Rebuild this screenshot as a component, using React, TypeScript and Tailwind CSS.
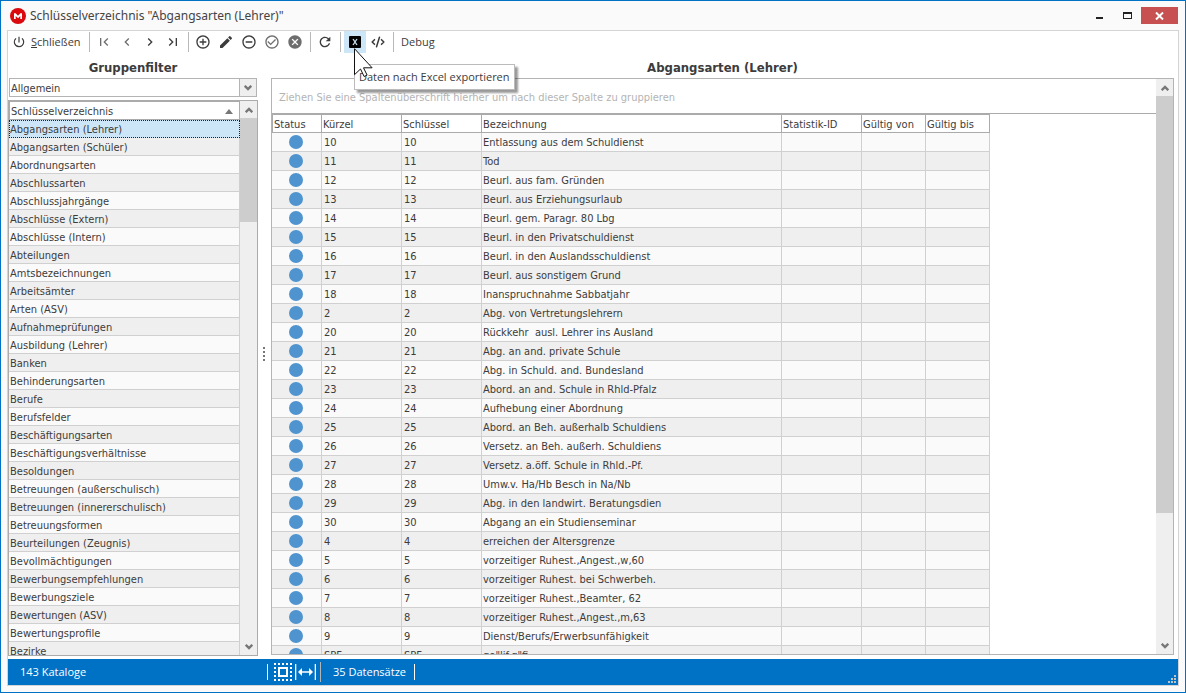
import type { ReactNode } from "react";
import { CodeXml } from "lucide-react";
import {
  MdAddCircleOutline,
  MdCancel,
  MdCheckCircleOutline,
  MdChevronLeft,
  MdChevronRight,
  MdEdit,
  MdFirstPage,
  MdLastPage,
  MdPowerSettingsNew,
  MdRefresh,
  MdRemoveCircleOutline,
} from "react-icons/md";

const catalogs = [
  "Abgangsarten (Lehrer)", "Abgangsarten (Schüler)", "Abordnungsarten", "Abschlussarten",
  "Abschlussjahrgänge", "Abschlüsse (Extern)", "Abschlüsse (Intern)", "Abteilungen",
  "Amtsbezeichnungen", "Arbeitsämter", "Arten (ASV)", "Aufnahmeprüfungen",
  "Ausbildung (Lehrer)", "Banken", "Behinderungsarten", "Berufe", "Berufsfelder",
  "Beschäftigungsarten", "Beschäftigungsverhältnisse", "Besoldungen",
  "Betreuungen (außerschulisch)", "Betreuungen (innererschulisch)", "Betreuungsformen",
  "Beurteilungen (Zeugnis)", "Bevollmächtigungen", "Bewerbungsempfehlungen",
  "Bewerbungsziele", "Bewertungen (ASV)", "Bewertungsprofile", "Bezirke",
];

const records: [string, string][] = [
  ["10", "Entlassung aus dem Schuldienst"],
  ["11", "Tod"],
  ["12", "Beurl. aus fam. Gründen"],
  ["13", "Beurl. aus Erziehungsurlaub"],
  ["14", "Beurl. gem. Paragr. 80 Lbg"],
  ["15", "Beurl. in den Privatschuldienst"],
  ["16", "Beurl. in den Auslandsschuldienst"],
  ["17", "Beurl. aus sonstigem Grund"],
  ["18", "Inanspruchnahme Sabbatjahr"],
  ["2", "Abg. von Vertretungslehrern"],
  ["20", "Rückkehr  ausl. Lehrer ins Ausland"],
  ["21", "Abg. an and. private Schule"],
  ["22", "Abg. in Schuld. and. Bundesland"],
  ["23", "Abord. an and. Schule in Rhld-Pfalz"],
  ["24", "Aufhebung einer Abordnung"],
  ["25", "Abord. an Beh. außerhalb Schuldiens"],
  ["26", "Versetz. an Beh. außerh. Schuldiens"],
  ["27", "Versetz. a.öff. Schule in Rhld.-Pf."],
  ["28", "Umw.v. Ha/Hb Besch in Na/Nb"],
  ["29", "Abg. in den landwirt. Beratungsdien"],
  ["30", "Abgang an ein Studienseminar"],
  ["4", "erreichen der Altersgrenze"],
  ["5", "vorzeitiger Ruhest.,Angest.,w,60"],
  ["6", "vorzeitiger Ruhest. bei Schwerbeh."],
  ["7", "vorzeitiger Ruhest.,Beamter, 62"],
  ["8", "vorzeitiger Ruhest.,Angest.,m,63"],
  ["9", "Dienst/Berufs/Erwerbsunfähigkeit"],
  ["SPF", "ge\"lif.g\"fi"],
];

const columns = ["Status", "Kürzel", "Schlüssel", "Bezeichnung", "Statistik-ID", "Gültig von", "Gültig bis"];

function Chevron({ down = false }: { down?: boolean }) {
  return (
    <svg viewBox="0 0 8 6" className={down ? "h-1.5 w-2 rotate-180" : "h-1.5 w-2"} aria-hidden="true">
      <path d="M0.7 5.2 4 1.9 7.3 5.2" fill="none" stroke="#777" strokeWidth="2.4" />
    </svg>
  );
}

function ScrollBar({ thumb }: { thumb: string }) {
  return (
    <div className="flex w-[17px] shrink-0 flex-col bg-[#efefef]">
      <button aria-label="Nach oben" className="flex h-[17px] shrink-0 items-center justify-center">
        <Chevron />
      </button>
      <div className="min-h-0 flex-1">
        <div className={thumb} />
      </div>
      <button aria-label="Nach unten" className="flex h-[17px] shrink-0 items-center justify-center">
        <Chevron down />
      </button>
    </div>
  );
}

function ToolButton({ label, light = false, children }: { label: string; light?: boolean; children: ReactNode }) {
  return (
    <button
      aria-label={label}
      className={
        light
          ? "flex h-[22px] w-[23px] items-center justify-center text-[#6e6e6e]"
          : "flex h-[22px] w-[23px] items-center justify-center text-[#3c3c3c]"
      }
    >
      {children}
    </button>
  );
}

function Separator() {
  return <div className="mr-0.5 ml-1 h-5 w-px bg-[#b8b8b8]" />;
}

function TitleBar() {
  return (
    <header className="flex h-[29px] shrink-0 items-center pl-[3px]">
      <svg viewBox="0 0 16 16" className="size-4" aria-hidden="true">
        <circle cx="8" cy="8" r="8" fill="#d9090e" />
        <path d="M4 11V5.2h1.6L8 7.7l2.4-2.5H12V11h-1.7V7.9L8 10.2 5.7 7.9V11Z" fill="#fff" />
      </svg>
      <h1 className="ml-1 flex-1 font-['Noto_Sans','Open_Sans',sans-serif] text-xs text-[#444]">Schlüsselverzeichnis "Abgangsarten (Lehrer)"</h1>
      <button aria-label="Minimieren" className="flex h-[17px] w-[27px] items-center justify-center">
        <svg viewBox="0 0 9 7" className="h-[7px] w-[9px]" aria-hidden="true">
          <path d="M1 5h7v2H1z" fill="#222" />
        </svg>
      </button>
      <button aria-label="Maximieren" className="flex h-[17px] w-7 items-center justify-center">
        <svg viewBox="0 0 9 7" className="h-[7px] w-[9px]" aria-hidden="true">
          <path d="M0 0h9v7H0zM1 2v4h7V2z" fill="#222" fillRule="evenodd" />
        </svg>
      </button>
      <button aria-label="Fenster schließen" className="mr-px flex h-[17px] w-[37px] items-center justify-center bg-[#c75050]">
        <svg viewBox="0 0 9 8" className="h-2 w-[9px]" aria-hidden="true">
          <path d="m1 .5 7 7M8 .5l-7 7" stroke="#fff" strokeWidth="2" />
        </svg>
      </button>
    </header>
  );
}

function Toolbar() {
  return (
    <div role="toolbar" className="flex h-[22px] shrink-0 items-center pl-1 text-[11px] text-[#3c3c3c]">
      <button className="flex w-[77px] items-center gap-[5px] whitespace-nowrap">
        <MdPowerSettingsNew className="size-3.5 shrink-0" />
        <span><u>S</u>chließen</span>
      </button>
      <div className="mr-0.5 h-5 w-px bg-[#b8b8b8]" />
      <ToolButton label="Erster" light><MdFirstPage className="size-4" /></ToolButton>
      <ToolButton label="Zurück" light><MdChevronLeft className="size-4" /></ToolButton>
      <ToolButton label="Weiter"><MdChevronRight className="size-4" /></ToolButton>
      <ToolButton label="Letzter"><MdLastPage className="size-4" /></ToolButton>
      <Separator />
      <ToolButton label="Hinzufügen"><MdAddCircleOutline className="size-4" /></ToolButton>
      <ToolButton label="Bearbeiten"><MdEdit className="size-4" /></ToolButton>
      <ToolButton label="Löschen"><MdRemoveCircleOutline className="size-4" /></ToolButton>
      <ToolButton label="Speichern" light><MdCheckCircleOutline className="size-4" /></ToolButton>
      <ToolButton label="Verwerfen" light><MdCancel className="size-4" /></ToolButton>
      <Separator />
      <ToolButton label="Aktualisieren"><MdRefresh className="size-4" /></ToolButton>
      <Separator />
      <button
        aria-label="Daten nach Excel exportieren"
        aria-describedby="export-tip"
        className="relative ml-px flex h-[22px] w-[22px] items-center justify-center bg-[#cde6f7]"
      >
        <svg viewBox="0 0 12 12" className="size-3" aria-hidden="true">
          <rect width="12" height="12" rx="1" fill="#000" />
          <path d="m4 3 4 6M8 3 4 9" stroke="#cde6f7" strokeWidth="1.3" />
        </svg>
        <span
          id="export-tip"
          role="tooltip"
          className="absolute top-[33px] left-2.5 z-10 border border-[#bbb] bg-white px-1 py-[3px] leading-[18px] whitespace-nowrap shadow-[3px_3px_2px_#00000066]"
        >
          Daten nach Excel exportieren
        </span>
        <svg viewBox="0 0 19 29" className="absolute top-[17px] left-2.5 z-20 h-[29px] w-[19px]" aria-hidden="true">
          <path d="M.5.7v26l6-5.7 3.6 7.5 3-1.4-3.6-7.3h8.6Z" fill="#fff" stroke="#111" />
        </svg>
      </button>
      <ToolButton label="Quelltext"><CodeXml className="size-3.5" strokeWidth={2.6} /></ToolButton>
      <Separator />
      <button className="ml-[5px]">Debug</button>
    </div>
  );
}

function CatalogPanel() {
  return (
    <section className="flex w-[250px] shrink-0 flex-col">
      <h2 className="h-[25px] shrink-0 text-center text-[13px] leading-[30px] font-bold">Gruppenfilter</h2>
      <div className="relative mx-px shrink-0">
        <select
          aria-label="Gruppenfilter"
          className="block h-[19px] w-full appearance-none border border-[#b4b4b4] bg-white px-px pt-0.5 text-[11px] leading-[15px]"
        >
          <option>Allgemein</option>
        </select>
        <span className="pointer-events-none absolute inset-y-0 right-0 flex w-[18px] items-center justify-center border border-[#b4b4b4] bg-[#efefef]">
          <Chevron down />
        </span>
      </div>
      <div className="mt-[3px] mb-[3px] flex min-h-0 flex-1 border border-[#ababab]">
        <div className="min-w-0 flex-1 overflow-hidden">
          <table className="w-full table-fixed border-separate border-spacing-0 text-[11px] leading-[15px]">
            <thead>
              <tr>
                <th className="border border-[#ababab] p-0 pt-0.5 pl-px text-left font-normal">
                  <span className="flex items-center justify-between">
                    Schlüsselverzeichnis
                    <svg viewBox="0 0 8 5" className="mr-1.5 h-[5px] w-2" aria-hidden="true">
                      <path d="M0 5 4 0l4 5Z" fill="#777" />
                    </svg>
                  </span>
                </th>
              </tr>
            </thead>
            <tbody>
              {catalogs.map((name, i) => (
                <tr key={name} className="bg-[#fafafa] even:bg-[#efefef]" aria-selected={i === 0}>
                  <td
                    className={
                      i === 0
                        ? "border border-dotted border-[#222] bg-[#cde6f7] p-0 pt-px whitespace-nowrap"
                        : "border-r border-b border-[#d0d0d0] p-0 pt-0.5 pl-px whitespace-nowrap"
                    }
                  >
                    {name}
                  </td>
                </tr>
              ))}
            </tbody>
          </table>
        </div>
        <ScrollBar thumb="h-1/5 bg-[#cdcdcd]" />
      </div>
    </section>
  );
}

function RecordPanel() {
  return (
    <section className="mr-1 flex min-w-0 flex-1 flex-col">
      <h2 className="h-[25px] shrink-0 text-center text-[13px] leading-[30px] font-bold">Abgangsarten (Lehrer)</h2>
      <div className="mb-1 flex min-h-0 flex-1 border border-[#b4b4b4]">
        <div className="min-w-0 flex-1 overflow-hidden">
          <p className="h-[35px] border-b border-[#ababab] pl-[7px] text-[11px] leading-[38px] text-[#b4b4b4]">
            Ziehen Sie eine Spaltenüberschrift hierher um nach dieser Spalte zu gruppieren
          </p>
          <table className="w-[718px] table-fixed border-separate border-spacing-0 text-[11px] leading-[17px]">
            <colgroup>
              <col className="w-[50px]" />
              <col className="w-20" />
              <col className="w-20" />
              <col className="w-[300px]" />
              <col className="w-20" />
              <col className="w-16" />
              <col className="w-16" />
            </colgroup>
            <thead>
              <tr>
                {columns.map((title) => (
                  <th
                    key={title}
                    className="border-t border-r border-b border-[#ababab] p-0 pt-0.5 pl-px text-left leading-[15px] font-normal whitespace-nowrap first:border-l"
                  >
                    {title}
                  </th>
                ))}
              </tr>
            </thead>
            <tbody className="[&_td]:border-r [&_td]:border-b [&_td]:border-[#d0d0d0] [&_td]:whitespace-pre">
              {records.map(([key, name]) => (
                <tr key={key} className="bg-[#fafafa] even:bg-[#efefef]">
                  <td className="p-0">
                    <span className="ml-[17px] block size-3.5 rounded-full bg-[#4f94cf]" />
                  </td>
                  <td className="p-0 pt-px pl-0.5">{key}</td>
                  <td className="p-0 pt-px pl-0.5">{key}</td>
                  <td className="p-0 pt-px pl-px">{name}</td>
                  <td className="p-0" />
                  <td className="p-0" />
                  <td className="p-0" />
                </tr>
              ))}
            </tbody>
          </table>
        </div>
        <ScrollBar thumb="h-[77%] bg-[#cdcdcd]" />
      </div>
    </section>
  );
}

function StatusBar() {
  return (
    <footer className="flex h-[26px] shrink-0 items-center bg-[#0072c6] text-[11px] text-white">
      <span className="w-[259px] pl-3">143 Kataloge</span>
      <span className="h-4 w-px bg-white" />
      <svg viewBox="0 0 18 18" className="ml-1.5 size-[18px]" aria-hidden="true">
        <path
          d="M0 1h18M0 17h18M1 0v18M17 0v18"
          fill="none"
          stroke="#fff"
          strokeWidth="2"
          strokeDasharray="2 2"
        />
        <rect x="5" y="5" width="8" height="8" fill="none" stroke="#fff" strokeWidth="2" />
      </svg>
      <svg viewBox="0 0 21 16" className="ml-[3px] h-4 w-[21px]" aria-hidden="true">
        <path d="M.5 0v16M20.5 0v16M5 8h11" stroke="#fff" strokeWidth="1.6" />
        <path d="M3 8l4-4v8ZM18 8l-4-4v8Z" fill="#fff" />
      </svg>
      <span className="ml-1 h-5 w-px bg-[#b4b4b4]" />
      <span className="w-[93px] pl-3 whitespace-nowrap">35 Datensätze</span>
      <span className="h-4 w-px bg-white" />
      <svg viewBox="0 0 8 8" className="mt-auto mr-0.5 mb-0.5 ml-auto size-2" aria-hidden="true">
        <path d="M6 0h2v2H6zM3 3h2v2H3zM6 3h2v2H6zM0 6h2v2H0zM3 6h2v2H3zM6 6h2v2H6z" fill="#c4c4c4" />
      </svg>
    </footer>
  );
}

export default function App() {
  return (
    <div className="flex h-screen flex-col border border-[#0072c6] bg-[#fafafa] px-1.5 pb-1.5 font-['Open_Sans','Noto_Sans',sans-serif] text-[#3c3c3c]">
      <TitleBar />
      <main className="flex min-h-0 flex-1 flex-col border border-[#d4d4d4] bg-white">
        <Toolbar />
        <div className="flex min-h-0 flex-1 font-['DejaVu_Sans_Condensed','DejaVu_Sans',sans-serif]">
          <CatalogPanel />
          <div role="separator" className="flex w-[13px] shrink-0 items-center justify-center pr-0.5 pb-1">
            <svg viewBox="0 0 2 14" className="h-3.5 w-0.5" aria-hidden="true">
              <path d="M0 0h2v2H0zM0 4h2v2H0zM0 8h2v2H0zM0 12h2v2H0z" fill="#777" />
            </svg>
          </div>
          <RecordPanel />
        </div>
        <StatusBar />
      </main>
    </div>
  );
}
